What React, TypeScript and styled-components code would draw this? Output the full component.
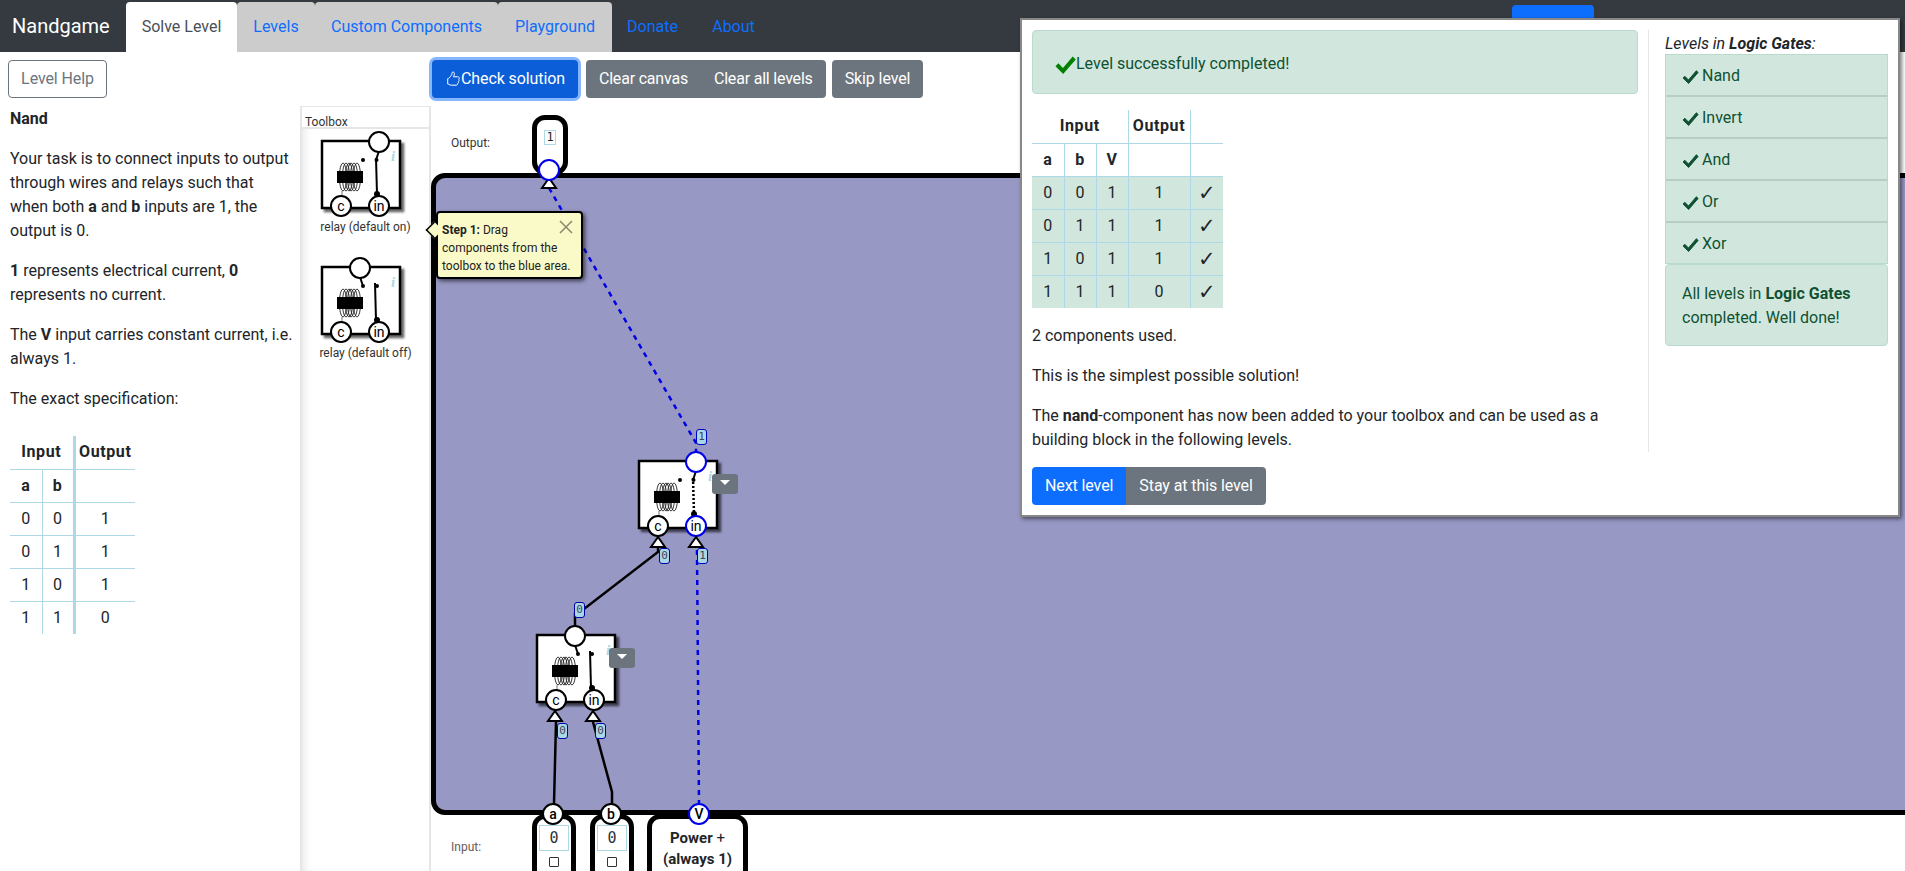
import React from 'react';
import styled, { createGlobalStyle } from 'styled-components';

const Global = createGlobalStyle`
  html, body { margin: 0; padding: 0; height: 100%; overflow: hidden; background: #fff; }
  body { font-family: Roboto, "Noto Sans", "Liberation Sans", sans-serif; font-size: 16px; line-height: 24px; color: #212529; }
  * { box-sizing: border-box; }
`;

const Page = styled.div`position: relative; width: 1905px; height: 871px; overflow: hidden;`;
const Nav = styled.nav`display: flex; align-items: flex-end; height: 52px; padding-left: 12px; background: #343a40;`;
const Brand = styled.div`width: 114px; height: 50px; line-height: 48px; font-size: 20px; color: #fff;`;
const TabsRow = styled.div`display: flex; height: 50px;`;
const Tab = styled.a<{ $active?: boolean; $w: number }>`
  width: ${p => p.$w}px; text-align: center; line-height: 50px; font-size: 16px; border-radius: 4px 4px 0 0;
  background: ${p => (p.$active ? '#fff' : '#ccc')}; color: ${p => (p.$active ? '#495057' : '#0d6efd')};
`;
const NavLink = styled.a<{ $w: number }>`width: ${p => p.$w}px; text-align: center; line-height: 50px; color: #0d6efd;`;
const NavBlue = styled.span`position: absolute; left: 1512px; top: 5px; width: 82px; height: 20px; border-radius: 4px; background: #0d6efd;`;

const Toolbar = styled.div`display: flex; align-items: center; height: 54px; padding-left: 8px;`;
const Btn = styled.button<{ $v: 'blue' | 'gray' | 'outline' | 'focus'; $joinL?: boolean; $joinR?: boolean }>`
  height: 38px; padding: 0 12px; font: inherit; letter-spacing: -0.1px; border: 1px solid transparent; border-radius: 4px;
  ${p => p.$joinL && 'border-top-left-radius:0;border-bottom-left-radius:0;'}
  ${p => p.$joinR && 'border-top-right-radius:0;border-bottom-right-radius:0;'}
  color: ${p => (p.$v === 'outline' ? '#6c757d' : '#fff')};
  background: ${p => ({ blue: '#0d6efd', gray: '#6c757d', outline: '#fff', focus: '#0b5ed7' }[p.$v])};
  ${p => p.$v === 'outline' && 'border-color:#6c757d;'}
  ${p => p.$v === 'focus' && 'box-shadow:0 0 0 3px #86b7fe;'}
  display: inline-flex; align-items: center; justify-content: center; white-space: nowrap;
`;
const ClearBtn = styled(Btn)`letter-spacing: -0.2px;`;
const HelpBtn = styled(Btn)`width: 99px;`;
const Spacer = styled.div<{ $w: number }>`width: ${p => p.$w}px; flex: none;`;
const Group = styled.div`display: flex;`;

const Body = styled.div`display: grid; grid-template-columns: 300px 131px 1fr; height: 765px;`;
const Help = styled.aside`padding: 1px 0 0 10px;`;
const Para = styled.p`margin: 0 0 16px; width: 285px;`;
const TruthHelp = styled.table`border-collapse: collapse; margin-top: 25px; text-align: center;`;
const Th = styled.th<{ $thick?: boolean; $w?: number; $sep?: boolean }>`
  height: 33px; padding: 0; font-weight: 700; letter-spacing: .6px; ${p => p.$w && `width:${p.$w}px;`}
  border-bottom: 1px solid #add8e6;
  ${p => p.$sep && 'border-right: 1px solid #add8e6;'}
  ${p => p.$thick && 'border-right: 3px solid #add8e6;'}
`;
const Td = styled.td<{ $thick?: boolean; $sep?: boolean; $last?: boolean; $ok?: boolean }>`
  height: 33px; padding: 0;
  ${p => !p.$last && 'border-bottom: 1px solid #add8e6;'}
  ${p => p.$sep && 'border-right: 1px solid #add8e6;'}
  ${p => p.$thick && 'border-right: 3px solid #add8e6;'}
  ${p => p.$ok && 'background:#d1e7dd;'}
`;
const Tick = styled(Td)`font-size: 21px; color: #212529;`;

const Toolbox = styled.aside`display: flex; flex-direction: column; border-left: 2px solid #e6e6e6; border-top: 1px solid #e6e6e6; border-right: 2px solid #e6e6e6;`;
const ToolboxHead = styled.div`height: 22px; padding: 4px 0 0 3px; font-size: 12px; line-height: 22px; color: #333; border-bottom: 2px solid #e6e6e6;`;
const ToolboxList = styled.div`flex: 1; min-height: 0; box-shadow: inset 10px 0 10px -8px #e4e4e4, inset 0 -10px 10px -8px #e4e4e4;`;
const ToolItem = styled.div`display: flex; flex-direction: column; align-items: center; height: 126px;`;
const ToolSvg = styled.svg`display: block; flex: none; margin-top: 1px;`;
const ToolLabel = styled.div`font-size: 12px; line-height: 18px; color: #333; white-space: nowrap;`;
const ToolboxFoot = styled.div`height: 15px; flex: none; border-top: 2px solid #e6e6e6; display: flex; padding-left: 11px; overflow: hidden;`;

const Stage = styled.section`position: relative; display: flex; flex-direction: column; min-width: 0;`;
const OutputRow = styled.div`display: flex; height: 67px; flex: none; align-items: flex-start;`;
const RowLabel = styled.div<{ $c?: string; $top?: number }>`width: 101px; flex: none; padding: ${p => p.$top || 0}px 0 0 20px; font-size: 12px; color: ${p => p.$c || '#333'};`;
const OutBox = styled.div`width: 36px; height: 60px; margin-top: 9px; display: flex; justify-content: center; padding-top: 10px; background: #fff; border: 5px solid #000; border-radius: 13px;`;
const Val = styled.div`height: 15px; min-width: 12px; padding: 0 1px; border: 1px solid #add8e6; font: 12px/13px "DejaVu Sans Mono", monospace; text-align: center;`;
const BlueArea = styled.div`height: 642px; flex: none; margin-right: -20px; background: #9898c5; border: 5px solid #000; border-radius: 14px;`;
const InputRow = styled.div`display: flex; flex: 1; min-height: 0; align-items: flex-start; overflow: hidden;`;
const InBoxWrap = styled.div`display: flex; gap: 14px; margin-top: -1px;`;
const InputBox = styled.div<{ $w: number }>`
  width: ${p => p.$w}px; height: 80px; border: 5px solid #000; border-radius: 13px; background: #fff;
  display: flex; flex-direction: column; align-items: center; padding-top: 6px;
  &:last-child { margin-left: -1px; }
`;
const InVal = styled.div`width: 30px; height: 26px; flex: none; border: 1px solid #add8e6; font: 15px/24px "DejaVu Sans Mono", monospace; text-align: center; color: #333;`;
const Check = styled.span`display: block; width: 10px; height: 10px; margin-top: 6px; border: 1px solid #333; border-radius: 1px; flex: none;`;
const PowerText = styled.div`font-weight: 700; font-size: 15px; line-height: 21px; text-align: center; padding-top: 3px;`;
const Plain = styled.span`font-weight: 400;`;
const Wires = styled.svg`position: absolute; left: 0; top: 0; pointer-events: none;`;
const Tag = styled.span<{ $x: number; $y: number; $blue?: boolean }>`
  position: absolute; left: ${p => p.$x - 431}px; top: ${p => p.$y - 106}px; width: 11px; height: 16px;
  border-radius: 3px; background: #a8d8e6; border: 1px solid ${p => (p.$blue ? '#0000c8' : '#0000a0')};
  font: 11px/14px "DejaVu Sans Mono", monospace; text-align: center; color: #445;
`;
const Drop = styled.span<{ $x: number; $y: number }>`
  position: absolute; left: ${p => p.$x - 431}px; top: ${p => p.$y - 106}px; width: 26px; height: 20px;
  border-radius: 3px; background: #6c757d;
  &::after { content: ''; position: absolute; left: 8px; top: 6px; border: 5px solid transparent; border-top-color: #fff; border-bottom: 0; }
`;
const Tip = styled.div`
  position: absolute; left: 5px; top: 105px; width: 147px; height: 68px; padding: 8px 4px;
  background: #fafac8; border: 2px solid #000; border-radius: 4px; box-shadow: 2px 2px 4px rgba(0,0,0,.6);
  font-size: 12px; line-height: 18px; color: #222;
  &::before { content: ''; position: absolute; left: -12px; top: 9px; width: 14px; height: 14px; background: #fafac8; border-left: 2px solid #000; border-bottom: 2px solid #000; transform: rotate(45deg) scale(.75); transform-origin: center; }
`;
const TipText = styled.div`position: relative; white-space: nowrap;`;
const TipClose = styled.svg`position: absolute; right: 8px; top: 7px;`;

const Modal = styled.div`
  position: absolute; left: 1020px; top: 18px; width: 880px; height: 499px; background: #fff;
  border: 2px solid #888; box-shadow: 2px 2px 4px rgba(0,0,0,.5); padding: 10px;
  display: flex; flex-direction: column;
`;
const ModalCols = styled.div`display: grid; grid-template-columns: 617px 1fr; grid-template-rows: 422px; flex: none; height: 422px;`;
const ModalMain = styled.div`border-right: 1px solid #e6e6e6; padding-right: 10px;`;
const SuccessAlert = styled.div`display: flex; align-items: center; height: 64px; padding: 4px 22px 0; background: #d1e7dd; border: 1px solid #badbcc; border-radius: 4px; color: #0f5132;`;
const Truth = styled.table`border-collapse: collapse; margin: 16px 0 16px; text-align: center;`;
const TH = styled.th<{ $w?: number; $r?: boolean }>`
  height: 33px; padding: 0; font-weight: 700; letter-spacing: .6px; ${p => p.$w && `width:${p.$w}px;`}
  border-bottom: 1px solid #add8e6; ${p => p.$r && 'border-right: 1px solid #add8e6;'}
`;
const ModalPara = styled.p`margin: 0 0 16px; font-size: 16px; &:last-child { margin-bottom: 0; }`;
const Side = styled.div`padding: 0 0 0 16px;`;
const SideTitle = styled.div`font-style: italic; line-height: 24px; height: 24px; padding-top: 2px;`;
const LevelList = styled.div`border: 1px solid #badbcc; background: #d1e7dd; color: #0f5132; width: 223px;`;
const LevelItem = styled.div`display: flex; align-items: center; gap: 3px; height: 42px; padding: 2px 0 0 16px; border-bottom: 2px solid #b6cec4; &:last-child { border-bottom: 0; height: 40px; }`;
const AllDone = styled.div`width: 223px; height: 82px; padding: 2px 16px 0; background: #d1e7dd; border: 1px solid #badbcc; border-radius: 4px; color: #0f5132; display: flex; align-items: center;`;
const BtnRow = styled.div`display: flex; margin-top: 15px;`;
const FlexIcon = styled.svg`flex: none;`;

const ThumbIcon = () => (
  <FlexIcon width="16" height="16" viewBox="0 0 16 16" fill="none" stroke="#fff" strokeWidth="1">
    <path d="M8 1c1 0 1.4.8 1.4 1.7 0 1-.6 2-.9 3.1h4.2c1 0 1.6.7 1.600 1.500 0 .500-.200.900-.500 1.200.200.300.300.600.300.900 0 .600-.300 1-.700 1.300.100.300.100.600 0 .900-.100.500-.500.900-.900 1 .100.300.100.600-.100.900-.300.500-.800.700-1.400.700H6.500c-1 0-1.800-.300-2.500-.800-.500-.300-.900-.400-1.300-.400V7.600c.700 0 1.200-.300 1.700-.900C5.600 5.300 7 3.800 7 2.200 7 1.500 7.300 1 8 1z" />
  </FlexIcon>
);
const CheckMark = ({ size, color }: { size: number; color: string }) => (
  <FlexIcon width={size} height={size} viewBox="0 0 16 16" fill={color} stroke={color} strokeWidth=".9">
    <path d="M13.500 2.600 6.100 11.300 2.600 7.700 1 9.400l5.200 5.200 9-10.400z" />
  </FlexIcon>
);

type RelayProps = { x: number; y: number; off?: boolean; active?: boolean };
const Relay = ({ x, y, off, active }: RelayProps) => {
  const outX = off ? 38 : 57;
  return (
    <g transform={`translate(${x} ${y})`}>
      <rect x="0" y="0" width="78" height="67" fill="#fff" stroke="#000" strokeWidth="2.500" filter="url(#sh)" />
      <text x="69" y="20" fontFamily="Liberation Serif, serif" fontStyle="italic" fontWeight="700" fontSize="15" fill="#add8e6">i</text>
      <path d="M20 50v9" stroke="#777" strokeWidth="1" />
      {[21, 24, 27, 29, 32, 35].map(c => (
        <ellipse key={c} cx={c} cy="36" rx="3.600" ry="14" fill="none" stroke="#222" strokeWidth=".9" />
      ))}
      <rect x="15" y="30" width="26" height="12" fill="#000" />
      <circle cx="41" cy="19" r="2" fill="#000" />
      {off ? (
        <>
          <path d="M38 10l3 9" stroke="#000" strokeWidth="2" />
          <path d="M53 16l1 37" stroke="#000" strokeWidth="2" />
          <circle cx="55" cy="19" r="2" fill="#000" />
        </>
      ) : (
        <>
          <path d="M57 10l-3 9" stroke="#000" strokeWidth="2" />
          <path d="M54 17l1 36" stroke="#000" strokeWidth={active ? 2.500 : 2} strokeDasharray={active ? '2 2' : undefined} />
          <circle cx="54.500" cy="19" r="2" fill="#000" />
        </>
      )}
      <circle cx="55" cy="53" r="3" fill="#000" />
      <path d="M55 53l2 6" stroke="#000" strokeWidth="1.500" />
      <circle cx={outX} cy="1" r="10" fill="#fff" stroke={active ? '#0000e6' : '#000'} strokeWidth="2" />
      <circle cx="19" cy="65" r="10" fill="#fff" stroke="#000" strokeWidth="2" />
      <circle cx="57" cy="65" r="10" fill="#fff" stroke={active ? '#0000e6' : '#000'} strokeWidth="2" />
      <text x="19" y="69.500" textAnchor="middle" fontFamily="Roboto, sans-serif" fontSize="14" fill="#000">c</text>
      <text x="57" y="69.500" textAnchor="middle" fontFamily="Roboto, sans-serif" fontSize="14" fill="#000">in</text>
    </g>
  );
};
const ShadowDef = () => (
  <defs>
    <filter id="sh" x="-10%" y="-10%" width="130%" height="130%">
      <feDropShadow dx="3" dy="3" stdDeviation="1.200" floodColor="#000" floodOpacity=".6" />
    </filter>
  </defs>
);
const Arrow = ({ x, y }: { x: number; y: number }) => (
  <path d={`M${x} ${y}l-7 10h14z`} fill="#fff" stroke="#000" strokeWidth="2" />
);
const Pin = ({ x, y, t, blue }: { x: number; y: number; t?: string; blue?: boolean }) => (
  <g>
    <circle cx={x} cy={y} r="10" fill="#fff" stroke={blue ? '#0000e6' : '#000'} strokeWidth="2" />
    {t && <text x={x} y={y + 5} textAnchor="middle" fontFamily="Roboto, sans-serif" fontWeight="500" fontSize="14" fill="#000">{t}</text>}
  </g>
);

const Tool = ({ off, label }: { off?: boolean; label: string }) => (
  <ToolItem>
    <ToolSvg width="100" height="88" viewBox="0 0 100 88">
      <Relay x={6} y={11} off={off} />
    </ToolSvg>
    <ToolLabel>{label}</ToolLabel>
  </ToolItem>
);

export default function App() {
  return (
    <Page>
      <Global />
      <Nav>
        <Brand>Nandgame</Brand>
        <TabsRow>
          <Tab $active $w={111}>Solve Level</Tab>
          <Tab $w={78}>Levels</Tab>
          <Tab $w={183}>Custom Components</Tab>
          <Tab $w={114}>Playground</Tab>
        </TabsRow>
        <NavLink $w={81}>Donate</NavLink>
        <NavLink $w={81}>About</NavLink>
        <NavBlue />
      </Nav>
      <Toolbar>
        <HelpBtn $v="outline">Level Help</HelpBtn>
        <Spacer $w={325} />
        <Btn $v="focus"><ThumbIcon />Check solution</Btn>
        <Spacer $w={8} />
        <Group>
          <ClearBtn $v="gray" $joinR>Clear canvas</ClearBtn>
          <ClearBtn $v="gray" $joinL>Clear all levels</ClearBtn>
        </Group>
        <Spacer $w={6} />
        <Btn $v="gray">Skip level</Btn>
      </Toolbar>
      <Body>
        <Help>
          <Para><b>Nand</b></Para>
          <Para>Your task is to connect inputs to output through wires and relays such that when both <b>a</b> and <b>b</b> inputs are 1, the output is 0.</Para>
          <Para><b>1</b> represents electrical current, <b>0</b> represents no current.</Para>
          <Para>The <b>V</b> input carries constant current, i.e. always 1.</Para>
          <Para>The exact specification:</Para>
          <TruthHelp>
            <thead>
              <tr><Th colSpan={2} $thick>Input</Th><Th $w={61}>Output</Th></tr>
              <tr><Th $w={32} $sep>a</Th><Th $w={32} $thick>b</Th><Th /></tr>
            </thead>
            <tbody>
              {[[0, 0, 1], [0, 1, 1], [1, 0, 1], [1, 1, 0]].map((r, i) => (
                <tr key={i}>
                  <Td $sep $last={i === 3}>{r[0]}</Td><Td $thick $last={i === 3}>{r[1]}</Td><Td $last={i === 3}>{r[2]}</Td>
                </tr>
              ))}
            </tbody>
          </TruthHelp>
        </Help>
        <Toolbox>
          <ToolboxHead>Toolbox</ToolboxHead>
          <ToolboxList>
            <Tool label="relay (default on)" />
            <Tool off label="relay (default off)" />
          </ToolboxList>
          <ToolboxFoot>
            <svg width="20" height="13" viewBox="0 0 20 13"><circle cx="10" cy="14" r="5" fill="none" stroke="#000" strokeWidth="2" /><path d="M1 12.500h18" stroke="#999" /></svg>
          </ToolboxFoot>
        </Toolbox>
        <Stage>
          <OutputRow>
            <RowLabel $top={25}>Output:</RowLabel>
            <OutBox><Val>1</Val></OutBox>
          </OutputRow>
          <BlueArea />
          <InputRow>
            <RowLabel $c="#6b5a5a" $top={20}>Input:</RowLabel>
            <InBoxWrap>
              <InputBox $w={44}><InVal>0</InVal><Check /></InputBox>
              <InputBox $w={44}><InVal>0</InVal><Check /></InputBox>
              <InputBox $w={101}><PowerText>Power <Plain>+</Plain><br />(always 1)</PowerText></InputBox>
            </InBoxWrap>
          </InputRow>
          <Wires width="1474" height="765" viewBox="431 106 1474 765">
            <ShadowDef />
            <g fill="none" strokeWidth="2.500" stroke="#0000e6" strokeDasharray="5 5">
              <path d="M549 188L696 443V452" />
              <path d="M697 550L699 804" />
            </g>
            <g fill="none" strokeWidth="2.500" stroke="#000">
              <path d="M658 548V552L584 609L575 614V626" />
              <path d="M556 722L554 804" />
              <path d="M593 722L612 792V804" />
            </g>
            <Relay x={639} y={461} active />
            <Relay x={537} y={635} off />
            <Arrow x={549} y={178} />
            <Arrow x={658} y={537} />
            <Arrow x={696} y={537} />
            <Arrow x={555} y={711} />
            <Arrow x={593} y={711} />
            <Pin x={549} y={170} blue />
            <Pin x={553} y={814} t="a" />
            <Pin x={611} y={814} t="b" />
            <Pin x={699} y={814} t="V" blue />
          </Wires>
          <Tag $x={696} $y={429} $blue>1</Tag>
          <Tag $x={659} $y={548}>0</Tag>
          <Tag $x={697} $y={548} $blue>1</Tag>
          <Tag $x={574} $y={602}>0</Tag>
          <Tag $x={557} $y={723}>0</Tag>
          <Tag $x={595} $y={723}>0</Tag>
          <Drop $x={712} $y={474} />
          <Drop $x={609} $y={648} />
          <Tip>
            <TipText><b>Step 1:</b> Drag<br />components from the<br />toolbox to the blue area.</TipText>
            <TipClose width="14" height="14" viewBox="0 0 14 14"><path d="M1 1l12 12M13 1L1 13" stroke="#888870" strokeWidth="1.500" /></TipClose>
          </Tip>
        </Stage>
      </Body>
      <Modal>
        <ModalCols>
          <ModalMain>
            <SuccessAlert><CheckMark size={21} color="#008000" />Level successfully completed!</SuccessAlert>
            <Truth>
              <thead>
                <tr><TH colSpan={3} $r>Input</TH><TH $w={62} $r>Output</TH><TH $w={33} /></tr>
                <tr><TH $w={32} $r>a</TH><TH $w={32} $r>b</TH><TH $w={32} $r>V</TH><TH $r /><TH /></tr>
              </thead>
              <tbody>
                {[[0, 0, 1, 1], [0, 1, 1, 1], [1, 0, 1, 1], [1, 1, 1, 0]].map((r, i) => (
                  <tr key={i}>
                    {r.map((v, j) => <Td key={j} $sep $ok $last={i === 3}>{v}</Td>)}
                    <Tick $ok $last={i === 3}>✓</Tick>
                  </tr>
                ))}
              </tbody>
            </Truth>
            <ModalPara>2 components used.</ModalPara>
            <ModalPara>This is the simplest possible solution!</ModalPara>
            <ModalPara>The <b>nand</b>-component has now been added to your toolbox and can be used as a building block in the following levels.</ModalPara>
          </ModalMain>
          <Side>
            <SideTitle>Levels in <b>Logic Gates</b>:</SideTitle>
            <LevelList>
              {['Nand', 'Invert', 'And', 'Or', 'Xor'].map(t => (
                <LevelItem key={t}><CheckMark size={17} color="#0f5132" />{t}</LevelItem>
              ))}
            </LevelList>
            <AllDone><div>All levels in <b>Logic Gates</b> completed. Well done!</div></AllDone>
          </Side>
        </ModalCols>
        <BtnRow>
          <Btn $v="blue" $joinR>Next level</Btn>
          <Btn $v="gray" $joinL>Stay at this level</Btn>
        </BtnRow>
      </Modal>
    </Page>
  );
}
